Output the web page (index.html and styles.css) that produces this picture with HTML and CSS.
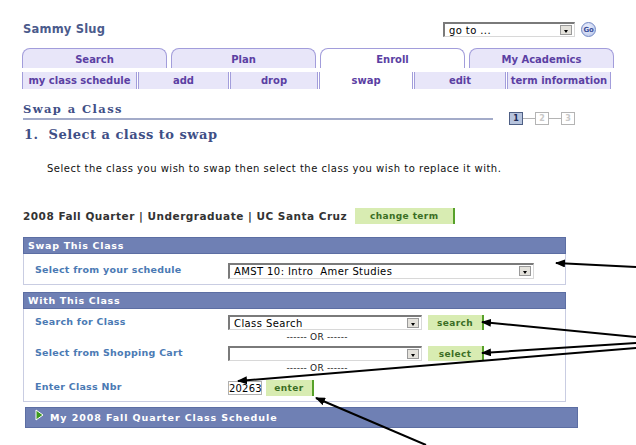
FILE: index.html
```html
<!DOCTYPE html>
<html>
<head>
<meta charset="utf-8">
<link rel="stylesheet" href="styles.css">
</head>
<body>
<div class="page">
  <div class="top">
    <div class="name">Sammy Slug</div>
    <div class="goto">
      <div class="dd goto-dd"><span class="dd-text">go to ...</span><span class="dd-btn"></span></div>
      <div class="go">Go</div>
    </div>
  </div>

  <div class="tabs">
    <div class="tab">Search</div>
    <div class="tab">Plan</div>
    <div class="tab active">Enroll</div>
    <div class="tab">My Academics</div>
  </div>

  <div class="subtabs">
    <div class="sub w1">my class schedule</div>
    <div class="sub w2">add</div>
    <div class="sub w3">drop</div>
    <div class="sub w4 active">swap</div>
    <div class="sub w5">edit</div>
    <div class="sub w6">term information</div>
  </div>

  <div class="titlerow">
    <div class="title">Swap a Class</div>
    <div class="steps">
      <span class="step on">1</span><span class="link"></span><span class="step">2</span><span class="link"></span><span class="step">3</span>
    </div>
  </div>

  <div class="stephead">1.&nbsp; Select a class to swap</div>

  <div class="desc">Select the class you wish to swap then select the class you wish to replace it with.</div>

  <div class="term">
    <span>2008 Fall Quarter | Undergraduate | UC Santa Cruz</span>
    <span class="btn wide">change term</span>
  </div>

  <div class="box">
    <div class="boxhead">Swap This Class</div>
    <div class="boxbody one">
      <div class="lbl">Select from your schedule</div>
      <div class="dd big"><span class="dd-text">AMST 10: Intro  Amer Studies</span><span class="dd-btn"></span></div>
    </div>
  </div>

  <div class="box second">
    <div class="boxhead">With This Class</div>
    <div class="boxbody">
      <div class="row">
        <div class="lbl">Search for Class</div>
        <div class="ctl">
          <div class="dd mid"><span class="dd-text">Class Search</span><span class="dd-btn"></span></div>
          <span class="btn">search</span>
        </div>
      </div>
      <div class="or or1">------ OR ------</div>
      <div class="row">
        <div class="lbl">Select from Shopping Cart</div>
        <div class="ctl">
          <div class="dd mid"><span class="dd-text"></span><span class="dd-btn"></span></div>
          <span class="btn">select</span>
        </div>
      </div>
      <div class="or or2">------ OR ------</div>
      <div class="row last">
        <div class="lbl">Enter Class Nbr</div>
        <div class="ctl">
          <div class="nbr">20263</div>
          <span class="btn small">enter</span>
        </div>
      </div>
    </div>
  </div>

  <div class="collapse">
    <svg class="tri" width="9" height="12" viewBox="0 0 9 12"><path d="M1 1 L8 6 L1 11 Z" fill="#3c9a1e" stroke="#ffffff" stroke-width="1"/></svg>
    <span>My 2008 Fall Quarter Class Schedule</span>
  </div>
</div>

<svg class="arrows" width="636" height="445" viewBox="0 0 636 445">
  <defs>
    <marker id="ah" markerWidth="10" markerHeight="8" refX="9" refY="4" orient="auto" markerUnits="userSpaceOnUse">
      <path d="M0 0 L10 4 L0 8 Z" fill="#000"/>
    </marker>
  </defs>
  <g stroke="#000" stroke-width="2" fill="none">
    <line x1="636" y1="267" x2="556" y2="263" marker-end="url(#ah)"/>
    <line x1="636" y1="337" x2="482" y2="322" marker-end="url(#ah)"/>
    <line x1="636" y1="343" x2="482" y2="353" marker-end="url(#ah)"/>
    <line x1="636" y1="348" x2="238" y2="381" marker-end="url(#ah)"/>
    <line x1="426" y1="445" x2="316" y2="398" marker-end="url(#ah)"/>
  </g>
</svg>
</body>
</html>
```

FILE: styles.css
```css
* { box-sizing: border-box; }
html, body { margin: 0; padding: 0; background: #fff; }
body {
  width: 636px; height: 445px; overflow: hidden; position: relative;
  font-family: "DejaVu Sans", Verdana, sans-serif; color: #000;
}
.page { padding-left: 22px; width: 636px; }

.top { height: 46px; display: flex; align-items: flex-start; justify-content: space-between; width: 574px; }
.name { margin-top: 22px; margin-left: 1px; font-size: 11.5px; font-weight: bold; color: #4b5b8c; letter-spacing: 0.2px; }
.goto { display: flex; align-items: center; margin-top: 22px; gap: 6px; }
.dd {
  position: relative; height: 15px; background: #fff;
  border-top: 2px solid #7a7a7a; border-left: 2px solid #7a7a7a;
  border-right: 1px solid #d8d8d8; border-bottom: 1px solid #d8d8d8;
  display: flex; align-items: center;
  font-size: 10px; padding-left: 4px; letter-spacing: 0.4px;
}
.dd-text { white-space: pre; }
.dd-btn {
  position: absolute; right: 2px; top: 1px; width: 12px; height: 10px;
  background: #e4e2dc; border: 1px solid #9a9a9a;
}
.dd-btn::after {
  content: ""; position: absolute; left: 3px; top: 4px;
  border-left: 2.5px solid transparent; border-right: 2.5px solid transparent; border-top: 3px solid #000;
}
.goto-dd { width: 132px; }
.go {
  width: 15px; height: 15px; border-radius: 50%;
  background: radial-gradient(circle at 40% 35%, #eef2ff, #b4c2e8);
  border: 1px solid #7288c4; font-size: 7px; font-weight: bold; color: #3a4e96;
  display: flex; align-items: center; justify-content: center; letter-spacing: -0.3px;
}

.tabs { display: flex; gap: 4px; margin-top: 2px; height: 20px; }
.tab {
  width: 145px; height: 20px; border: 1px solid #a29ddb; border-bottom: none;
  border-radius: 8px 8px 0 0; background: #e8e6f9;
  font-size: 10px; font-weight: bold; color: #5b3fa3;
  display: flex; align-items: center; justify-content: center; padding-top: 2px;
}
.tab.active { background: #fff; }

.subtabs { display: flex; gap: 1px; margin-top: 4px; height: 17px; }
.sub {
  height: 17px; border-left: 1px solid #a29ddb; border-right: 1px solid #a29ddb;
  background: #e8e6f9; font-size: 10px; font-weight: bold; color: #5b3fa3;
  display: flex; align-items: center; justify-content: center;
}
.sub.active { background: #fff; }
.w1 { width: 115px; } .w2 { width: 91px; } .w3 { width: 88px; }
.w4 { width: 94px; } .w5 { width: 92px; } .w6 { width: 104px; }

.titlerow { display: flex; align-items: flex-end; margin-top: 12px; height: 24px; }
.title {
  width: 470px; height: 18px; border-bottom: 2px solid #a3abc9; margin-left: 1px;
  font-family: "DejaVu Serif", Georgia, serif; font-size: 11.5px; font-weight: bold;
  color: #3f4f86; letter-spacing: 1.4px; line-height: 14px; margin-bottom: 5px;
}
.steps { display: flex; align-items: center; margin-left: 16px; height: 14px; }
.step {
  width: 14px; height: 13px; border: 1px solid #b4b4b4; background: #fff;
  font-size: 8px; font-weight: bold; color: #c8c8c8; display: flex; align-items: center; justify-content: center;
}
.step.on { background: #b7c4dd; border-color: #4e5f84; color: #1c2a55; }
.link { width: 12px; height: 1px; background: #b4b4b4; }

.stephead {
  margin-top: 2px; margin-left: 2px; height: 20px;
  font-family: "DejaVu Serif", Georgia, serif; font-size: 13px; font-weight: bold; color: #3f4f86; letter-spacing: 0.5px;
}
.desc { margin-top: 16px; margin-left: 25px; font-size: 10px; letter-spacing: 0.5px; color: #111; height: 12px; }

.term {
  margin-top: 32px; display: flex; align-items: center; gap: 8px; height: 17px; margin-left: 1px;
  font-size: 10.5px; font-weight: bold; color: #333; letter-spacing: 0.5px;
}
.btn {
  display: inline-flex; align-items: center; justify-content: center;
  height: 15px; background: #d8ecb2; border-right: 2px solid #57a12a;
  color: #3b6e24; font-size: 9px; font-weight: bold; padding: 0 4px; letter-spacing: 0.4px;
  width: 56px;
}
.btn.wide { width: 100px; height: 16px; }
.btn.small { width: 48px; height: 16px; }

.box { margin-top: 13px; width: 543px; margin-left: 1px; }
.box.second { margin-top: 7px; }
.boxhead {
  height: 17px; background: #6f80b4; color: #fff; font-size: 9.5px; font-weight: bold;
  letter-spacing: 0.7px; padding-left: 4px; display: flex; align-items: center;
  border: 1px solid #5c6ea3;
}
.boxbody { border: 1px solid #c9cde2; border-top: none; padding: 6px 0 5px 11px; }
.boxbody.one { display: flex; align-items: center; height: 31px; padding: 0 0 0 11px; }
.lbl { width: 193px; font-size: 9.5px; font-weight: bold; color: #4b7ab4; letter-spacing: 0.25px; }
.boxbody.one .lbl { margin-top: 0px; }
.dd.big { width: 306px; height: 16px; margin-top: 4px; }
.dd.mid { width: 194px; height: 15px; }

.row { display: flex; align-items: center; height: 15px; }
.row .lbl { margin-top: -3px; }
.row.last { height: 16px; }
.ctl { display: flex; align-items: center; gap: 6px; }
.or { margin-left: 232px; font-size: 9px; height: 15px; line-height: 13px; color: #222; letter-spacing: 0.2px; width: 100px; text-align: center; }
.or1 { height: 16px; line-height: 14px; }
.or2 { height: 19px; line-height: 14px; }
.nbr {
  width: 34px; height: 14px; border: 1px solid #b0b0b0; font-size: 10px; letter-spacing: 0.2px;
  display: flex; align-items: center; padding-left: 0px; margin-right: -2px; overflow: visible; white-space: nowrap;
}

.collapse {
  margin-top: 5px; margin-left: 3px; width: 553px; height: 21px; background: #6f80b4;
  border: 1px solid #5c6ea3; display: flex; align-items: center; gap: 6px; padding-left: 9px;
  color: #fff; font-size: 9.5px; font-weight: bold; letter-spacing: 0.9px;
}
.tri { margin-top: -5px; }

.arrows { position: absolute; left: 0; top: 0; pointer-events: none; }
```
